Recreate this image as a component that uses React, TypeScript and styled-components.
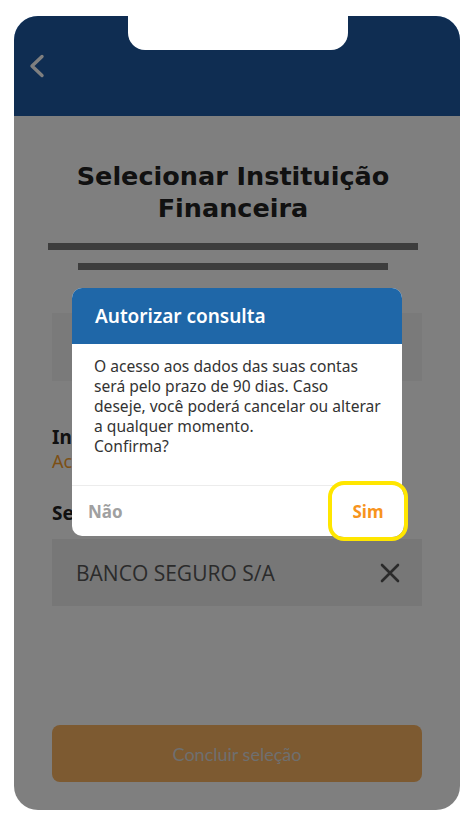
import React from 'react'
import styled, { createGlobalStyle } from 'styled-components'

const GlobalStyle = createGlobalStyle`
  html, body {
    margin: 0;
    padding: 0;
    background: #ffffff;
  }
  * {
    box-sizing: border-box;
  }
`

const Page = styled.div`
  width: 474px;
  height: 826px;
  padding: 16px 14px 16px 14px;
`

const Phone = styled.div`
  position: relative;
  width: 446px;
  height: 794px;
  border-radius: 24px;
  overflow: hidden;
  background: #ffffff;
  display: flex;
  flex-direction: column;
`

const Notch = styled.div`
  position: absolute;
  top: 0;
  left: 114px;
  width: 220px;
  height: 34px;
  background: #ffffff;
  border-radius: 0 0 17px 17px;
  z-index: 3;
`

const Header = styled.div`
  height: 100px;
  flex-shrink: 0;
  background: #1e5aa4;
  padding: 38px 0 0 14px;
`

const BackButton = styled.button`
  border: none;
  background: none;
  padding: 0;
  width: 18px;
  height: 24px;
  display: flex;
  align-items: center;
  justify-content: center;
`

const Content = styled.div`
  flex: 1;
  display: flex;
  flex-direction: column;
  padding: 44px 38px 28px 38px;
  font-family: "Noto Sans", sans-serif;
`

const Title = styled.h1`
  margin: 0 8px 0 0;
  font-family: "DejaVu Sans", sans-serif;
  font-weight: 700;
  font-size: 25.5px;
  line-height: 32px;
  color: #222222;
  text-align: center;
`

const Bar = styled.div<{ $width: number; $offset: number; $top: number }>`
  height: 7px;
  width: ${p => p.$width}px;
  margin-left: ${p => p.$offset}px;
  margin-top: ${p => p.$top}px;
  background: #7a7a7a;
`

const SearchBox = styled.div`
  height: 68px;
  margin-top: 43px;
  background: #f4f4f4;
`

const Label = styled.div`
  margin-top: 44px;
  font-size: 19px;
  font-weight: 700;
  line-height: 24px;
  color: #222222;
`

const Hint = styled.div`
  font-size: 18px;
  line-height: 24px;
  color: #f99e2a;
`

const SectionLabel = styled(Label)`
  margin-top: 28px;
`

const SelectedItem = styled.div`
  margin-top: 14px;
  height: 67px;
  background: #eeeeee;
  display: flex;
  align-items: center;
  justify-content: space-between;
  padding: 0 22px 0 24px;
  font-family: "Open Sans", sans-serif;
  font-size: 21px;
  color: #575757;
`

const Spacer = styled.div`
  flex: 1;
`

const ConfirmButton = styled.button`
  height: 57px;
  width: 100%;
  border: none;
  border-radius: 8px;
  background: #fab462;
  color: #dedede;
  font-family: Lato, sans-serif;
  font-size: 18px;
`

const Overlay = styled.div`
  position: absolute;
  inset: 0;
  background: rgba(0, 0, 0, 0.5);
  display: flex;
  align-items: center;
  justify-content: center;
  z-index: 2;
`

const Dialog = styled.div`
  width: 330px;
  height: 248px;
  margin-top: -2px;
  background: #ffffff;
  border-radius: 10px;
  display: flex;
  flex-direction: column;
  font-family: "Noto Sans", sans-serif;
`

const DialogHeader = styled.div`
  height: 56px;
  background: #1f67a8;
  border-radius: 10px 10px 0 0;
  display: flex;
  align-items: center;
  padding: 0 23px;
  color: #ffffff;
  font-size: 19px;
  font-weight: 600;
`

const DialogBody = styled.p`
  flex: 1;
  margin: 0;
  padding: 12px 12px 0 22px;
  font-size: 15.6px;
  line-height: 20px;
  color: #333333;
  white-space: nowrap;
`

const DialogFooter = styled.div`
  height: 51px;
  border-top: 1.5px solid #ececec;
  display: flex;
  align-items: center;
  justify-content: space-between;
  padding-left: 16px;
`

const ActionButton = styled.button<{ $primary?: boolean; $focused?: boolean }>`
  border: none;
  background: #ffffff;
  font-family: "Noto Sans", sans-serif;
  font-size: 17px;
  font-weight: 700;
  color: ${p => (p.$primary ? '#f7941d' : '#a0a0a0')};
  padding: 0;
  height: ${p => (p.$primary ? '52px' : '100%')};
  width: ${p => (p.$primary ? '72px' : 'auto')};
  border-radius: 12px;
  outline: ${p => (p.$focused ? '4px solid #ffe600' : 'none')};
  margin-right: ${p => (p.$primary ? '-2px' : '0')};
`

const Chevron = () => (
  <svg width="18" height="24" viewBox="0 0 18 24" fill="none">
    <path d="M14 2.5 L4 12 L14 21.5" stroke="#ffffff" strokeWidth="3.4" strokeLinecap="round" strokeLinejoin="round" />
  </svg>
)

const CloseIcon = () => (
  <svg width="20" height="20" viewBox="0 0 20 20" fill="none">
    <path d="M2 2 L18 18 M18 2 L2 18" stroke="#555555" strokeWidth="2.6" strokeLinecap="round" />
  </svg>
)

const App: React.FC = () => {
  return (
    <Page>
      <GlobalStyle />
      <Phone>
        <Notch />
        <Header>
          <BackButton aria-label="Voltar">
            <Chevron />
          </BackButton>
        </Header>

        <Content>
          <Title>
            Selecionar Instituição
            <br />
            Financeira
          </Title>
          <Bar $width={370} $offset={-4} $top={19} />
          <Bar $width={310} $offset={26} $top={13} />
          <SearchBox />

          <Label>Instituição</Label>
          <Hint>Acesso</Hint>

          <SectionLabel>Selecionada</SectionLabel>
          <SelectedItem>
            BANCO SEGURO S/A
            <CloseIcon />
          </SelectedItem>

          <Spacer />
          <ConfirmButton>Concluir seleção</ConfirmButton>
        </Content>

        <Overlay>
          <Dialog role="dialog">
            <DialogHeader>Autorizar consulta</DialogHeader>
            <DialogBody>
              O acesso aos dados das suas contas
              <br />
              será pelo prazo de 90 dias. Caso
              <br />
              deseje, você poderá cancelar ou alterar
              <br />
              a qualquer momento.
              <br />
              Confirma?
            </DialogBody>
            <DialogFooter>
              <ActionButton>Não</ActionButton>
              <ActionButton $primary $focused>Sim</ActionButton>
            </DialogFooter>
          </Dialog>
        </Overlay>
      </Phone>
    </Page>
  )
}

export default App
